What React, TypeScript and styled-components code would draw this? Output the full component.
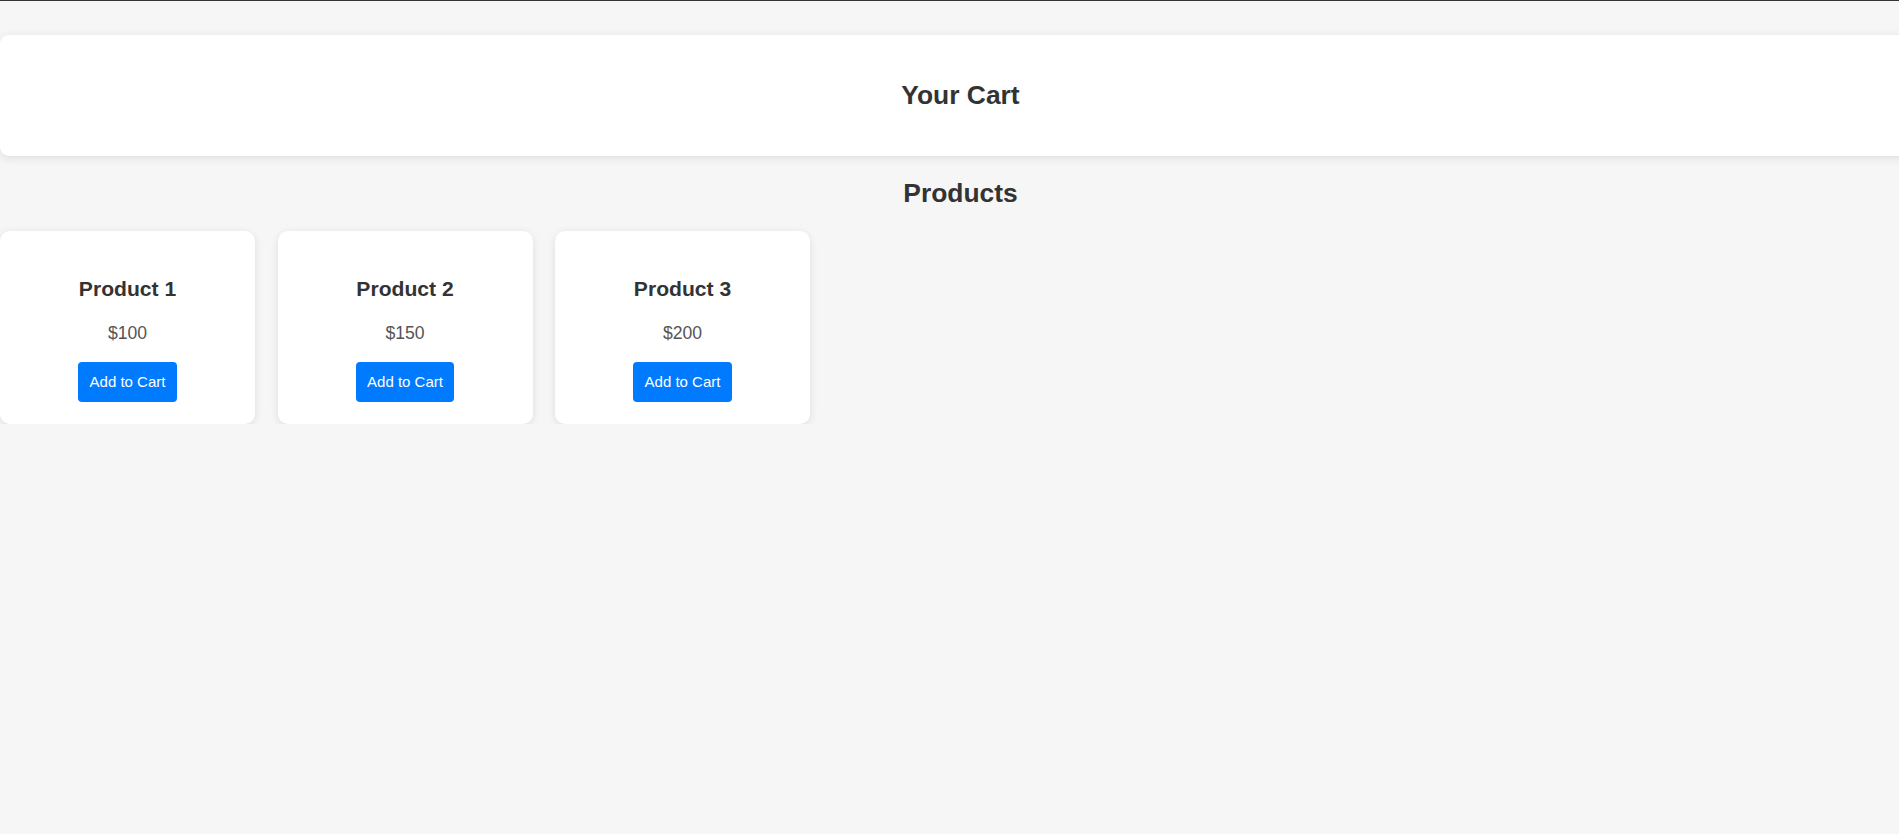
import React from "react";
import styled, { createGlobalStyle } from "styled-components";

const Global = createGlobalStyle`
  html, body {
    margin: 0;
    padding: 0;
    overflow-x: hidden;
  }
  body {
    background: #f6f6f6;
    border-top: 1px solid #333333;
    font-family: "Liberation Sans", Arial, sans-serif;
    color: #333333;
  }
`;

const Page = styled.div`
  width: calc(100% + 22px);
  padding-top: 34px;
  text-align: center;
`;

const CartBox = styled.section`
  padding: 45px 0 46px;
  background: #ffffff;
  border-radius: 9px;
  box-shadow: 0 2px 10px rgba(0, 0, 0, 0.1);
`;

const Heading = styled.h2`
  margin: 0;
  font-size: 26.4px;
  line-height: 30px;
  font-weight: 700;
  color: #333333;
`;

const SectionHeading = styled(Heading)`
  margin: 22px 0 23px;
`;

const ProductRow = styled.div`
  display: flex;
  gap: 22.5px;
  align-items: flex-start;
`;

const Card = styled.div`
  box-sizing: border-box;
  width: 255px;
  padding: 46px 22px 22px;
  background: #ffffff;
  border-radius: 10px;
  box-shadow: 0 2px 9px rgba(0, 0, 0, 0.1);
  display: flex;
  flex-direction: column;
  align-items: center;
`;

const ProductName = styled.h3`
  margin: 0;
  font-size: 21.1px;
  line-height: 24px;
  font-weight: 700;
  color: #333333;
`;

const Price = styled.p`
  margin: 22px 0 19px;
  font-size: 17.6px;
  line-height: 20px;
  color: #555555;
`;

const AddButton = styled.button`
  font-family: "Liberation Sans", Arial, sans-serif;
  font-size: 15px;
  line-height: 18px;
  padding: 11px 11.2px;
  background: #007bff;
  color: #ffffff;
  border: none;
  border-radius: 4px;
  cursor: pointer;
`;

const products = [
  { id: 1, name: "Product 1", price: 100 },
  { id: 2, name: "Product 2", price: 150 },
  { id: 3, name: "Product 3", price: 200 },
];

export default function App() {
  return (
    <>
      <Global />
      <Page>
        <CartBox>
          <Heading>Your Cart</Heading>
        </CartBox>
        <SectionHeading>Products</SectionHeading>
        <ProductRow>
          {products.map((p) => (
            <Card key={p.id}>
              <ProductName>{p.name}</ProductName>
              <Price>${p.price}</Price>
              <AddButton>Add to Cart</AddButton>
            </Card>
          ))}
        </ProductRow>
      </Page>
    </>
  );
}
